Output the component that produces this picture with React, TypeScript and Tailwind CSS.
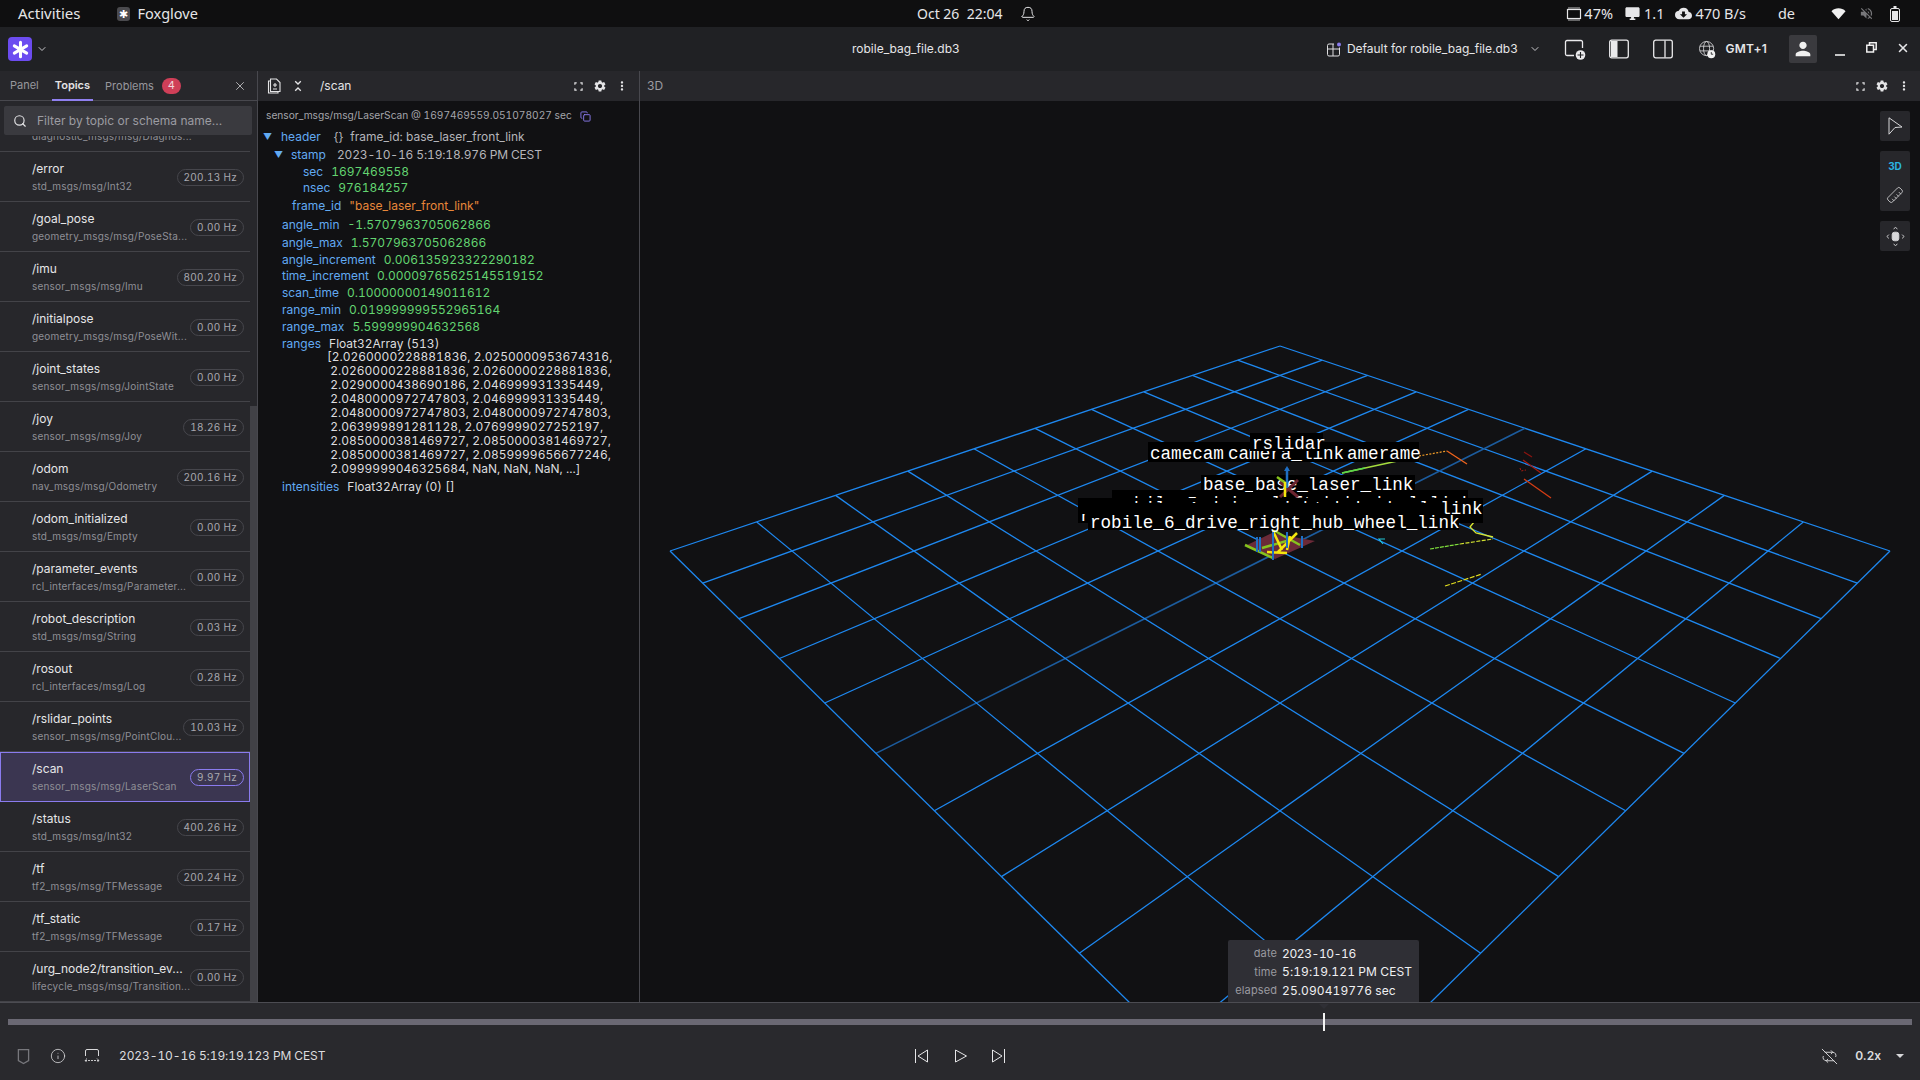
import {
  Bell,
  ChevronDown,
  Copy,
  Info,
  Ruler,
  Search,
  X,
} from "lucide-react";
import {
  MdCloudDownload,
  MdDesktopWindows,
  MdMoreVert,
  MdPerson,
  MdSettings,
  MdVolumeOff,
} from "react-icons/md";

type Topic = { name: string; schema: string; hz: string; active?: boolean };

const topics: Topic[] = [
  { name: "", schema: "diagnostic_msgs/msg/Diagnos...", hz: "" },
  { name: "/error", schema: "std_msgs/msg/Int32", hz: "200.13 Hz" },
  { name: "/goal_pose", schema: "geometry_msgs/msg/PoseSta...", hz: "0.00 Hz" },
  { name: "/imu", schema: "sensor_msgs/msg/Imu", hz: "800.20 Hz" },
  { name: "/initialpose", schema: "geometry_msgs/msg/PoseWit...", hz: "0.00 Hz" },
  { name: "/joint_states", schema: "sensor_msgs/msg/JointState", hz: "0.00 Hz" },
  { name: "/joy", schema: "sensor_msgs/msg/Joy", hz: "18.26 Hz" },
  { name: "/odom", schema: "nav_msgs/msg/Odometry", hz: "200.16 Hz" },
  { name: "/odom_initialized", schema: "std_msgs/msg/Empty", hz: "0.00 Hz" },
  { name: "/parameter_events", schema: "rcl_interfaces/msg/Parameter...", hz: "0.00 Hz" },
  { name: "/robot_description", schema: "std_msgs/msg/String", hz: "0.03 Hz" },
  { name: "/rosout", schema: "rcl_interfaces/msg/Log", hz: "0.28 Hz" },
  { name: "/rslidar_points", schema: "sensor_msgs/msg/PointClou...", hz: "10.03 Hz" },
  { name: "/scan", schema: "sensor_msgs/msg/LaserScan", hz: "9.97 Hz", active: true },
  { name: "/status", schema: "std_msgs/msg/Int32", hz: "400.26 Hz" },
  { name: "/tf", schema: "tf2_msgs/msg/TFMessage", hz: "200.24 Hz" },
  { name: "/tf_static", schema: "tf2_msgs/msg/TFMessage", hz: "0.17 Hz" },
  { name: "/urg_node2/transition_ev...", schema: "lifecycle_msgs/msg/Transition...", hz: "0.00 Hz" },
];

const TopicRow = ({ topic, first }: { topic: Topic; first?: boolean }) => (
  <div
    className={`h-[50px] shrink-0 flex items-center justify-between ${
      topic.active ? "pl-[31px] pr-[5px] bg-[#3b3651] border border-[#8a7bee]" : "pl-[32px] pr-[6px] border-b border-[#434348]"
    } ${first ? "-mt-[34px]" : ""}`}
  >
    <div className="min-w-0 whitespace-nowrap">
      <div className="h-[16px] text-[12px] leading-[16px] text-[#e6e6e8]">{topic.name}</div>
      <div className="text-[10px] leading-[14px] tracking-[0.2px] mt-[2px] text-[#8f8f96]">{topic.schema}</div>
    </div>
    {topic.hz && (
      <div
        className={`h-[17px] mt-[1px] px-[6px] shrink-0 rounded-full border flex items-center text-[10px] tabular-nums tracking-[0.3px] text-[#a9a9b0] ${
          topic.active ? "border-[#8a7bee]" : "border-[#46464c]"
        }`}
      >
        {topic.hz}
      </div>
    )}
  </div>
);

const Corners = ({ className }: { className?: string }) => (
  <svg viewBox="0 0 10 10" className={className} fill="none" stroke="currentColor" strokeWidth="1.3">
    <path d="M1 3V1h2M7 1h2v2M9 7v2H7M3 9H1V7" />
  </svg>
);

const PanelActions = () => (
  <div className="flex items-center text-[#e4e4e6]">
    <Corners className="w-[9px] h-[9px]" />
    <MdSettings className="w-[14px] h-[14px] ml-[10px]" />
    <MdMoreVert className="w-[14px] h-[14px] ml-[8px] mr-[9px]" />
  </div>
);

const Key = ({ children }: { children: string }) => <span className="text-[#62aaf2]">{children}</span>;

const TreeRow = ({
  pad,
  h,
  k,
  v,
  color = "text-[#63d471]",
}: {
  pad: string;
  h: string;
  k: string;
  v: string;
  color?: string;
}) => (
  <div className={`${pad} ${h} flex items-center whitespace-nowrap`}>
    <Key>{k}</Key>
    <span className={`ml-[8px] ${color}`}>{v}</span>
  </div>
);

const arrayLines = [
  "[2.0260000228881836, 2.0250000953674316,",
  " 2.0260000228881836, 2.0260000228881836,",
  " 2.0290000438690186, 2.046999931335449,",
  " 2.0480000972747803, 2.046999931335449,",
  " 2.0480000972747803, 2.0480000972747803,",
  " 2.063999891281128, 2.0769999027252197,",
  " 2.0850000381469727, 2.0850000381469727,",
  " 2.0850000381469727, 2.0859999656677246,",
  " 2.0999999046325684, NaN, NaN, NaN, ...]",
];

const DataTree = () => (
  <div className="text-[12px] tabular-nums text-[#b5b5ba]">
    <div className="h-[18px] mt-[6px] pl-[8px] flex items-center whitespace-nowrap text-[10.2px] text-[#a5a5ab]">
      sensor_msgs/msg/LaserScan @ 1697469559.051078027 sec
      <Copy className="w-[11px] h-[13px] ml-[8px] text-[#8a7bee]" />
    </div>
    <div className="h-[19px] mt-[2px] pl-[5px] flex items-center whitespace-nowrap">
      <span className="text-[#62aaf2] text-[9px] w-[18px]">▼</span>
      <Key>header</Key>
      <span className="ml-[13px]">{"{}"}</span>
      <span className="ml-[7px]">frame_id: base_laser_front_link</span>
    </div>
    <div className="h-[17px] pl-[16px] flex items-center whitespace-nowrap">
      <span className="text-[#62aaf2] text-[9px] w-[17px]">▼</span>
      <Key>stamp</Key>
      <span className="ml-[11px] tracking-[-0.15px]">2023-10-16 5:19:18.976 PM CEST</span>
    </div>
    <TreeRow pad="pl-[45px]" h="h-[17px]" k="sec" v="1697469558" />
    <TreeRow pad="pl-[45px]" h="h-[16px]" k="nsec" v="976184257" />
    <TreeRow pad="pl-[34px]" h="h-[20px]" k="frame_id" v={'"base_laser_front_link"'} color="text-[#e8873a]" />
    <TreeRow pad="pl-[24px]" h="h-[18px]" k="angle_min" v="-1.5707963705062866" />
    <TreeRow pad="pl-[24px]" h="h-[17px]" k="angle_max" v="1.5707963705062866" />
    <TreeRow pad="pl-[24px]" h="h-[17px]" k="angle_increment" v="0.006135923322290182" />
    <TreeRow pad="pl-[24px]" h="h-[16px]" k="time_increment" v="0.00009765625145519152" />
    <TreeRow pad="pl-[24px]" h="h-[17px]" k="scan_time" v="0.10000000149011612" />
    <TreeRow pad="pl-[24px]" h="h-[17px]" k="range_min" v="0.019999999552965164" />
    <TreeRow pad="pl-[24px]" h="h-[17px]" k="range_max" v="5.599999904632568" />
    <div className="h-[17px] pl-[24px] flex items-center whitespace-nowrap">
      <Key>ranges</Key>
      <span className="ml-[8px] text-[#dcdcdf]">Float32Array (513)</span>
    </div>
    <div className="pl-[69px] -mt-[2px] text-[#dcdcdf]">
      {arrayLines.map((line) => (
        <div key={line} className="h-[14px] leading-[14px] whitespace-pre">
          {line}
        </div>
      ))}
    </div>
    <div className="h-[17px] mt-[2px] pl-[24px] flex items-center whitespace-nowrap">
      <Key>intensities</Key>
      <span className="ml-[8px] text-[#dcdcdf]">Float32Array (0) []</span>
    </div>
  </div>
);

// grid corners are top (1280,346) right (1890,551) left (670,551), perspective factor measured from the ticks
const G = -0.329;
const project = (u: number, v: number) => {
  const w = 1 + G * u + G * v;
  const x = (1280 + (1890 * (1 + G) - 1280) * u + (670 * (1 + G) - 1280) * v) / w;
  const y = (346 + (551 * (1 + G) - 346) * u + (551 * (1 + G) - 346) * v) / w;
  return [x.toFixed(1), y.toFixed(1)];
};

const gridTicks = [0, 1, 2, 3, 4, 5, 6, 7, 8, 9, 10];

const MONO = "'Liberation Mono', monospace";

const SceneText = ({ x, y, text }: { x: number; y: number; text: string }) => (
  <text x={x} y={y} fill="#fff" fontSize="17.6" fontFamily={MONO}>
    {text}
  </text>
);

const SceneLabel = ({ x, y, w, h = 19, base, text }: { x: number; y: number; w: number; h?: number; base: number; text: string }) => (
  <g>
    <rect x={x} y={y} width={w} height={h} fill="#000" />
    <SceneText x={x + 2} y={base} text={text} />
  </g>
);

const Scene = () => (
  <svg viewBox="640 101 1280 901" className="w-full h-full block" fill="none">
    {gridTicks.map((t) => {
      const [ax, ay] = project(t / 10, 0);
      const [bx, by] = project(t / 10, 1);
      const [cx, cy] = project(0, t / 10);
      const [dx, dy] = project(1, t / 10);
      return (
        <g key={t} stroke="#1e88f0" strokeWidth="1.3">
          <line x1={ax} y1={ay} x2={bx} y2={by} stroke={t === 5 ? "#1c5c9e" : "#1e88f0"} strokeWidth={t === 5 ? 1.6 : 1.3} />
          <line x1={cx} y1={cy} x2={dx} y2={dy} />
        </g>
      );
    })}

    {/* laser returns */}
    <path d="M1342 473L1402 460" stroke="#a6dd3e" strokeWidth="1.5" />
    <path d="M1342 473L1365 468" stroke="#59d94c" strokeWidth="1.5" />
    <path d="M1419 456L1447 451" stroke="#ee9a28" strokeWidth="1.2" strokeDasharray="2 1.5" />
    <path d="M1447 451L1467 464" stroke="#f0641c" strokeWidth="1.3" />
    <path d="M1524 452L1532 457" stroke="#8a1410" strokeWidth="1.2" />
    <path d="M1523 460L1541 473" stroke="#a81c10" strokeWidth="1.2" />
    <path d="M1520 468L1521 471L1526 470" stroke="#a81c10" strokeWidth="1" strokeDasharray="2 1.5" />
    <path d="M1524 479L1551 498" stroke="#d63d14" strokeWidth="1.3" />
    <path d="M1474 522L1470 527L1476 533L1493 537" stroke="#d8e430" strokeWidth="1.3" />
    <path d="M1430 549L1460 544" stroke="#80e03c" strokeWidth="1.2" strokeDasharray="4 1" />
    <path d="M1460 544L1493 539" stroke="#d0e030" strokeWidth="1.2" strokeDasharray="4 1.5" />
    <path d="M1445 586L1482 574" stroke="#e4e020" strokeWidth="1.2" strokeDasharray="5 1.5" />
    <path d="M1385 539L1379 539L1383 544" stroke="#22c8d8" strokeWidth="1.2" />

    {/* robot frames */}
    <path d="M1247 545L1272 533L1315 541L1275 559Z" fill="#6b2a38" />
    <path d="M1245 545L1273 558M1273 530L1300 545M1262 548L1290 540" stroke="#86c21e" strokeWidth="2.5" />
    <path d="M1273 531L1282 550M1297 533L1277 553M1267 552L1287 553M1290 536L1287 550" stroke="#f4e60e" strokeWidth="2.5" />
    <path d="M1257 537V552M1260 537V552M1273 532V560M1287 532V548M1302 536V548" stroke="#1f6fc4" strokeWidth="2" />

    <SceneLabel x={1148} y={442} w={271} h={20} base={458.5} text="camecam" />
    <SceneText x={1228} y={458.5} text="camera_link" />
    <SceneText x={1347} y={458.5} text="amerame" />
    <SceneLabel x={1250} y={433} w={73} h={18} base={449} text="rslidar" />

    <rect x={1112} y={490} width={356} height={10} fill="#000" />
    <SceneText x={1113} y={509} text="robile_5_drive_left_hub_wheel_link" />
    <rect x={1078} y={498} width={405} height={25} fill="#000" />
    <SceneText x={1080} y={521} text="r" />
    <SceneText x={1113} y={514} text="robile_4_drive_right_hub_wheel_link" />
    <rect x={1078} y={503} width={365} height={11} fill="#000" />
    <SceneLabel x={1088} y={514} w={371} h={16} base={528} text="robile_6_drive_right_hub_wheel_link" />

    <SceneLabel x={1201} y={475} w={100} h={18} base={489.5} text="base_link" />
    <SceneLabel x={1253} y={475} w={162} h={18} base={489.5} text="base_laser_link" />

    {/* upper frames sit in front of the base label */}
    <path d="M1280 482L1298 497M1298 480L1280 497" stroke="#6b2430" strokeWidth="3" />
    <path d="M1277 477L1287 484" stroke="#86c21e" strokeWidth="2.5" />
    <path d="M1287 468V488" stroke="#1f6fc4" strokeWidth="2.5" />
    <path d="M1284 471L1287 466L1290 471" fill="#1f6fc4" />
    <path d="M1285 482V497" stroke="#f4e60e" strokeWidth="2.5" />
  </svg>
);

const ToolButton = ({ children, className = "" }: { children: React.ReactNode; className?: string }) => (
  <div className={`w-[30px] bg-[#27272b] rounded-[2px] flex flex-col items-center justify-center text-[#d8d8da] ${className}`}>
    {children}
  </div>
);

const SkipIcon = ({ flip }: { flip?: boolean }) => (
  <svg viewBox="0 0 16 16" className={`w-[16px] h-[16px] ${flip ? "scale-x-[-1]" : ""}`} fill="none" stroke="#e6e6e8" strokeWidth="1">
    <path d="M1.5 1v14M13.5 2v12L4 8z" />
  </svg>
);

export default function App() {
  return (
    <div className="w-[1920px] h-[1080px] flex flex-col overflow-hidden bg-[#111113] font-['Inter',sans-serif] text-[#e6e6e8]">
      {/* system bar */}
      <div className="h-[27px] shrink-0 bg-[#0f0f10] flex items-center font-['Noto_Sans',sans-serif] text-[14.5px] text-[#e6e6e8]">
        <div className="w-[917px] flex items-center pl-[18px] shrink-0 text-[15px]">
          <span>Activities</span>
          <div className="w-[13px] h-[14px] ml-[36px] rounded-[3px] bg-[#4a4a4e] flex items-center justify-center text-[11px] leading-none text-white">✱</div>
          <span className="ml-[8px] text-[14.5px]">Foxglove</span>
        </div>
        <span className="whitespace-pre text-[14px]">Oct 26  22:04</span>
        <Bell className="w-[16px] h-[16px] ml-[18px]" strokeWidth={1.5} />
        <div className="flex-1" />
        <svg viewBox="0 0 16 16" className="w-[16px] h-[16px]" fill="none" stroke="#e6e6e8" strokeWidth="1.2">
          <rect x="1.5" y="3.5" width="13" height="9" />
          <path d="M3 1v2M5 1v2M7 1v2M9 1v2M11 1v2M13 1v2M3 13v2M5 13v2M7 13v2M9 13v2M11 13v2M13 13v2" strokeWidth="0.8" />
        </svg>
        <span className="ml-[2px]">47%</span>
        <MdDesktopWindows className="w-[17px] h-[17px] ml-[11px]" />
        <span className="ml-[3px]">1.1</span>
        <MdCloudDownload className="w-[17px] h-[17px] ml-[11px]" />
        <span className="ml-[3px]">470 B/s</span>
        <span className="ml-[32px]">de</span>
        <svg viewBox="0 0 16 16" className="w-[15px] h-[15px] ml-[36px]" fill="#f0f0f0">
          <path d="M8 14L0.5 5.5C4.5 1.5 11.5 1.5 15.5 5.5z" />
        </svg>
        <MdVolumeOff className="w-[15px] h-[15px] ml-[13px] text-[#77777a]" />
        <svg viewBox="0 0 10 16" className="w-[10px] h-[16px] ml-[16px] mr-[20px]" fill="none" stroke="#e6e6e8">
          <rect x="0.5" y="2.5" width="9" height="13" rx="1.5" />
          <rect x="2" y="5" width="6" height="9" fill="#e6e6e8" stroke="none" />
          <path d="M3.5 1h3" strokeWidth="2" />
        </svg>
      </div>

      {/* app bar */}
      <div className="h-[44px] shrink-0 bg-[#202124] flex items-center text-[12px]">
        <div className="w-[852px] shrink-0 flex items-center pl-[8px]">
          <div className="w-[24px] h-[24px] rounded-[4px] bg-[#6c4cf0] flex items-center justify-center">
            <svg viewBox="0 0 20 20" className="w-[19px] h-[19px]" stroke="#fff" strokeWidth="3.2" strokeLinecap="round">
              <path d="M10 2.5v15M3.5 6.2l13 7.6M16.5 6.2l-13 7.6" />
            </svg>
          </div>
          <ChevronDown className="w-[12px] h-[12px] ml-[4px] text-[#c8c8cc]" />
        </div>
        <span className="w-[108px] shrink-0 whitespace-nowrap">robile_bag_file.db3</span>
        <div className="flex-1" />
        <svg viewBox="0 0 16 16" className="w-[16px] h-[17px] text-[#dedee0]" fill="none" stroke="currentColor">
          <path d="M8 2.5H3a1.5 1.5 0 0 0-1.5 1.5v9A1.5 1.5 0 0 0 3 14.5h9a1.5 1.5 0 0 0 1.5-1.5V6M1.5 7.5h12M7 2.5v12" />
          <circle cx="13" cy="3" r="2" fill="#8a7bee" stroke="none" />
        </svg>
        <span className="ml-[5px] whitespace-nowrap">Default for robile_bag_file.db3</span>
        <ChevronDown className="w-[12px] h-[12px] ml-[11px] text-[#c8c8cc]" />
        <svg viewBox="0 0 22 22" className="w-[22px] h-[22px] ml-[23px]" fill="none" stroke="#eaeaec" strokeWidth="1.3">
          <path d="M18.5 10V4a1.5 1.5 0 0 0-1.5-1.5H3A1.5 1.5 0 0 0 1.5 4v12A1.5 1.5 0 0 0 3 17.5h7" />
          <circle cx="16.5" cy="17" r="4.8" fill="#eaeaec" stroke="none" />
          <path d="M16.5 14v6M13.5 17h6" stroke="#202124" strokeWidth="1.1" />
        </svg>
        <svg viewBox="0 0 20 20" className="w-[20px] h-[20px] ml-[23px]" fill="none" stroke="#eaeaec" strokeWidth="1.3">
          <rect x="0.7" y="1.2" width="18.6" height="17.6" rx="2" />
          <path d="M2 2h6.5v16H2z" fill="#eaeaec" stroke="none" />
        </svg>
        <svg viewBox="0 0 20 20" className="w-[20px] h-[20px] ml-[24px]" fill="none" stroke="#eaeaec" strokeWidth="1.3">
          <rect x="0.7" y="1.2" width="18.6" height="17.6" rx="2" />
          <path d="M12 1.5v17" />
        </svg>
        <svg viewBox="0 0 18 20" className="w-[17px] h-[19px] ml-[26px]" fill="none" stroke="#d8d8da" strokeWidth="0.9">
          <circle cx="8" cy="9" r="7.5" />
          <ellipse cx="8" cy="9" rx="3.2" ry="7.5" />
          <path d="M1 6.5h14M1 11.5h14" />
          <circle cx="13" cy="15" r="4.2" fill="#f0f0f0" stroke="none" />
          <path d="M13 12.7V15h2" stroke="#202124" />
        </svg>
        <span className="ml-[10px] font-semibold text-[12px] tracking-[0.2px]">GMT+1</span>
        <div className="w-[28px] h-[28px] ml-[22px] bg-[#3a3a3e] rounded-[2px] flex items-center justify-center">
          <MdPerson className="w-[22px] h-[22px] text-[#f0f0f0]" />
        </div>
        <svg viewBox="0 0 10 10" className="w-[10px] h-[10px] ml-[18px] mt-[3px]" stroke="#f0f0f0" strokeWidth="1.6">
          <path d="M0 9h10" />
        </svg>
        <svg viewBox="0 0 11 11" className="w-[11px] h-[11px] ml-[21px] -mt-[3px]" fill="none" stroke="#f0f0f0" strokeWidth="1.5">
          <path d="M3.5 3V0.8h6.7v6.7H8M0.8 3.3h6.7V10H0.8z" />
        </svg>
        <X className="w-[14px] h-[14px] ml-[19px] mr-[10px] -mt-[3px]" strokeWidth={2.6} />
      </div>

      <div className="flex-1 min-h-0 flex">
        {/* sidebar */}
        <div className="w-[258px] shrink-0 bg-[#27272b] border-r border-[#48484e] flex flex-col">
          <div className="h-[30px] shrink-0 flex items-stretch border-b border-[#48484e] text-[11px] text-[#97979d] pl-[10px]">
            <div className="flex items-center">Panel</div>
            <div className="ml-[13px] px-[3px] flex items-center text-[#e2e2e4] font-semibold border-b-2 border-[#9080f0] -mb-[1px]">Topics</div>
            <div className="ml-[12px] pt-[2px] flex items-center">Problems</div>
            <div className="ml-[8px] self-center w-[19px] h-[16px] rounded-full bg-[#cf3f58] text-[#f0d8dc] text-[11px] flex items-center justify-center">4</div>
            <div className="flex-1" />
            <X className="w-[14px] h-[14px] self-center mr-[10px] text-[#c0c0c4]" strokeWidth={1.5} />
          </div>
          <div className="h-[35px] shrink-0 px-[4px] pt-[5px] pr-[5px]">
            <div className="h-[29px] bg-[#3a3a3f] rounded-[2px] flex items-center pl-[9px] text-[12px] text-[#9c9ca2]">
              <Search className="w-[14px] h-[14px] text-[#e4e4e6]" strokeWidth={2} />
              <span className="ml-[10px]">Filter by topic or schema name...</span>
            </div>
          </div>
          <div className="flex-1 min-h-0 flex overflow-hidden">
            <div className="w-[250px] shrink-0 flex flex-col">
              {topics.map((t, i) => (
                <TopicRow key={t.schema + t.name} topic={t} first={i === 0} />
              ))}
            </div>
            <div className="w-[7px] flex flex-col">
              <div className="h-[270px] shrink-0" />
              <div className="flex-1 bg-[#414146]" />
            </div>
          </div>
        </div>

        {/* raw messages */}
        <div className="w-[382px] shrink-0 flex flex-col border-r border-[#48484e]">
          <div className="h-[30px] shrink-0 bg-[#27272b] flex items-center pl-[9px] pr-[1px] text-[#e4e4e6]">
            <svg viewBox="0 0 15 16" className="w-[15px] h-[16px]" fill="none" stroke="currentColor" strokeWidth="1.1">
              <path d="M3 3H1.5v12h9.5v-1.5" />
              <path d="M3.5 1h6L13 4.5v9H3.5zM8 5v4M6 7h4M6 11h4" />
            </svg>
            <svg viewBox="0 0 10 14" className="w-[8px] h-[14px] ml-[12px]" fill="none" stroke="currentColor" strokeWidth="1.6">
              <path d="M1.5 1L5 4.5 8.5 1M1.5 13L5 9.5 8.5 13" />
            </svg>
            <span className="ml-[18px] text-[12px]">/scan</span>
            <div className="flex-1" />
            <PanelActions />
          </div>
          <div className="flex-1 min-h-0 overflow-hidden">
            <DataTree />
          </div>
        </div>

        {/* 3d panel */}
        <div className="flex-1 min-w-0 flex flex-col">
          <div className="h-[30px] shrink-0 bg-[#27272b] flex items-center pl-[7px] text-[12px] text-[#9b9ba1]">
            <span>3D</span>
            <div className="flex-1" />
            <PanelActions />
          </div>
          <div className="relative flex-1 min-h-0 overflow-hidden">
            <Scene />
            <div className="absolute right-[10px] top-[10px] flex flex-col gap-[10px]">
              <ToolButton className="h-[30px]">
                <svg viewBox="0 0 15 18" className="w-[15px] h-[18px]" fill="none" stroke="currentColor">
                  <path d="M1 0.8L14 10l-7 .5L1 17.2z" />
                </svg>
              </ToolButton>
              <ToolButton className="h-[60px] gap-[15px] pt-[2px]">
                <span className="text-[10px] font-bold leading-none text-[#2bb3e0]">3D</span>
                <Ruler className="w-[18px] h-[18px] rotate-90" strokeWidth={1.1} />
              </ToolButton>
              <ToolButton className="h-[30px]">
                <svg viewBox="0 0 20 22" className="w-[19px] h-[21px]" fill="none" stroke="currentColor" strokeWidth="1">
                  <rect x="6.5" y="6.5" width="7" height="9" rx="2.5" fill="currentColor" />
                  <path d="M8 3l2-1.5L12 3M8 19l2 1.5 2-1.5M3 9l-2 2 2 2M17 9l2 2-2 2" />
                </svg>
              </ToolButton>
            </div>
            <div className="absolute left-[588px] top-[839px] w-[191px] h-[64px] bg-[#2f2f35] rounded-[2px] flex flex-col justify-center text-[12px] tabular-nums tracking-[0.1px] text-[#f0f0f2]">
              <div className="h-[19px] flex items-center"><span className="w-[49px] text-right text-[11px] text-[#9a9aa0]">date</span><span className="ml-[5px] tracking-[-0.4px]">2023-10-16</span></div>
              <div className="h-[18px] flex items-center"><span className="w-[49px] text-right text-[11px] text-[#9a9aa0]">time</span><span className="ml-[5px] whitespace-nowrap">5:19:19.121 PM CEST</span></div>
              <div className="h-[19px] flex items-center"><span className="w-[49px] text-right text-[11px] text-[#9a9aa0]">elapsed</span><span className="ml-[5px] whitespace-nowrap">25.090419776 sec</span></div>
            </div>
          </div>
        </div>
      </div>

      {/* playback bar */}
      <div className="relative h-[78px] shrink-0 bg-[#29292d] border-t border-[#4c4c52] flex flex-col">
        <div className="mt-[16px] ml-[8px] mr-[8px] h-[6px] bg-[#6a6873]" />
        <div className="absolute left-[1323px] top-[10px] w-[2px] h-[18px] bg-[#f2f2f2]" />
        <div className="absolute left-[1319px] top-[1px] w-0 h-0 border-x-[5px] border-x-transparent border-t-[5px] border-t-[#2f2f35]" />
        <div className="flex-1 pt-[7px] flex items-center text-[#d8d8da]">
          <svg viewBox="0 0 14 18" className="w-[13px] h-[17px] ml-[17px] text-[#77777c]" fill="none" stroke="currentColor" strokeWidth="1.4">
            <path d="M1.5 1.5h11v12l-5.5 3-5.5-3z" />
          </svg>
          <Info className="w-[16px] h-[16px] ml-[20px]" strokeWidth={1.2} />
          <svg viewBox="0 0 16 16" className="w-[16px] h-[16px] ml-[18px]" fill="none" stroke="currentColor">
            <path d="M1.5 8V3A1.5 1.5 0 0 1 3 1.5h10A1.5 1.5 0 0 1 14.5 3v5" />
            <path d="M1 12.5h14M3 10.5l-2 2 2 2M13 10.5l2 2-2 2" strokeDasharray="2 1" strokeWidth="0.9" />
          </svg>
          <span className="ml-[19px] w-[204px] text-[12px] tabular-nums tracking-[-0.1px] text-[#dcdcdf] whitespace-nowrap">2023-10-16 5:19:19.123 PM CEST</span>
          <div className="ml-[591px] flex items-center">
            <SkipIcon />
            <svg viewBox="0 0 16 16" className="w-[16px] h-[16px] ml-[23px]" fill="none" stroke="#e6e6e8">
              <path d="M2.5 2v12L13.5 8z" />
            </svg>
            <div className="ml-[21px]"><SkipIcon flip /></div>
          </div>
          <div className="flex-1" />
          <svg viewBox="0 0 18 18" className="w-[17px] h-[17px] mr-[1px]" fill="none" stroke="currentColor" strokeWidth="1">
            <path d="M4 4.5h8.5a3.5 3.5 0 0 1 3 5M14 13.5H5.5a3.5 3.5 0 0 1-3-5M10.5 2.5l2 2-2 2M7.5 11.5l-2 2 2 2M1 1l16 16" />
          </svg>
          <span className="ml-[16px] text-[12px] font-semibold text-[#dcdcdf]">0.2x</span>
          <div className="ml-[15px] mr-[16px] w-0 h-0 border-x-[4px] border-x-transparent border-t-[4px] border-t-[#d8d8da]" />
        </div>
      </div>
    </div>
  );
}
